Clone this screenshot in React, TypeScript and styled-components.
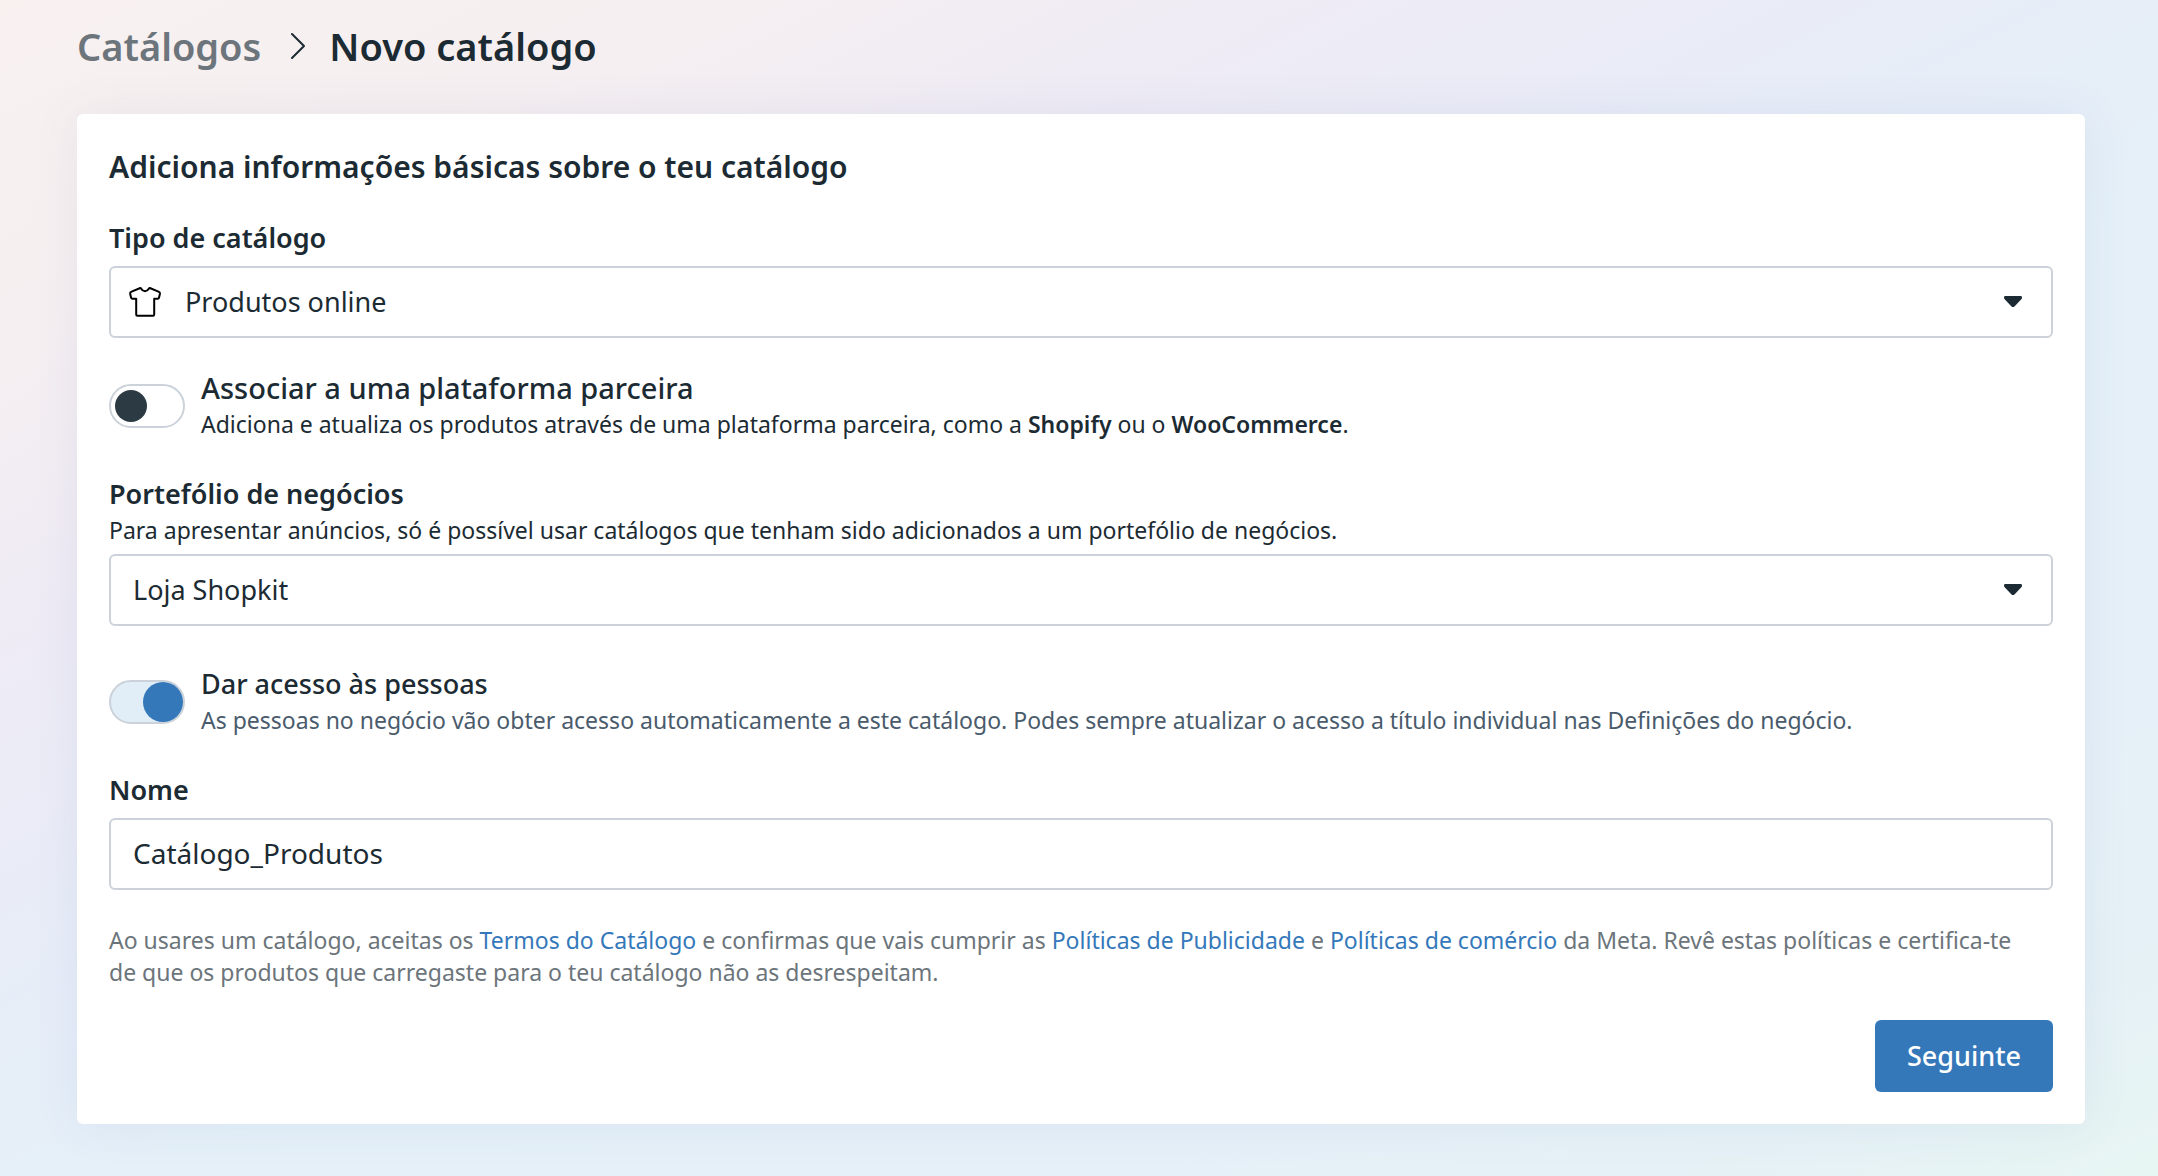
import React, { useId, useState } from "react";
import type { ReactNode } from "react";
import styled, { createGlobalStyle, css } from "styled-components";

const color = {
  text: "#1c2b33",
  muted: "#6c757b",
  slate: "#4a5b6c",
  border: "#cbd2d9",
  accent: "#3578ba",
  accentSoft: "#e1edf7",
  knob: "#2c3a43",
};

const GlobalStyle = createGlobalStyle`
  *, *::before, *::after { box-sizing: border-box; }
  html, body { margin: 0; }
  body {
    font-family: "Noto Sans", "Open Sans", sans-serif;
    color: ${color.text};
  }
`;

const Page = styled.main`
  min-height: 100vh;
  padding: 22px 73px 52px 77px;
  background: linear-gradient(
    154deg,
    #f8f1f0 0%,
    #f6eff1 15%,
    #eeebf5 29%,
    #e9ecf7 40%,
    #e6eef8 48%,
    #e5f0f8 56%,
    #e6f0f8 78%,
    #e6f1f6 90%,
    #e7f5f2 100%
  );
`;

const Breadcrumb = styled.nav`
  display: flex;
  align-items: center;
  gap: 24px;
  margin-bottom: 44px;
  font-size: 38px;
  font-weight: 600;
  line-height: 48px;
`;

const CrumbLink = styled.a`
  color: ${color.muted};
  text-decoration: none;
`;

const CrumbTitle = styled.h1`
  margin: 0;
  font: inherit;
`;

const Card = styled.form`
  display: flex;
  flex-direction: column;
  gap: 34px;
  padding: 32px;
  border-radius: 6px;
  background: #fff;
  box-shadow: 0 0 48px rgba(60, 90, 150, 0.08);
`;

const Heading = styled.h2`
  margin: 0;
  font-size: 30px;
  font-weight: 600;
  line-height: 42px;
`;

const Field = styled.div<{ $loose?: boolean }>`
  display: flex;
  flex-direction: column;
  gap: 4px;
  margin-bottom: ${(p) => (p.$loose ? 8 : 0)}px;
`;

const Label = styled.label`
  font-size: 27px;
  font-weight: 600;
  line-height: 32px;
`;

const Help = styled.p<{ $tone?: string }>`
  margin: 0;
  font-size: 23px;
  line-height: 32px;
  color: ${(p) => p.$tone ?? color.text};

  strong {
    font-weight: 600;
  }
`;

const Terms = styled(Help)`
  padding-right: 12px;
`;

const boxed = css`
  height: 72px;
  margin-top: 8px;
  border: 2px solid ${color.border};
  border-radius: 6px;
  background: #fff;
`;

const SelectBox = styled.div<{ $joined?: boolean }>`
  ${boxed}
  display: grid;
  grid-template-columns: auto 1fr auto;
  align-items: center;
  margin-top: ${(p) => (p.$joined ? 4 : 8)}px;
  padding-right: 29px;

  > svg:first-child {
    margin: 0 2px 0 18px;
  }
  > svg:last-child {
    grid-area: 1 / 3;
    pointer-events: none;
  }
`;

const Select = styled.select`
  grid-area: 1 / 2 / 2 / 4;
  width: 100%;
  height: 68px;
  padding: 0 40px 2px 22px;
  border: 0;
  outline: 0;
  appearance: none;
  background: transparent;
  color: inherit;
  font: inherit;
  font-size: 27px;
`;

const TextInput = styled.input`
  ${boxed}
  width: 100%;
  padding: 0 22px 2px;
  outline: 0;
  color: inherit;
  font: inherit;
  font-size: 28px;
`;

const SwitchRow = styled.div`
  display: flex;
  align-items: flex-start;
  gap: 16px;
  padding-bottom: 4px;
`;

const SwitchText = styled.div`
  display: flex;
  flex-direction: column;
  gap: 4px;
`;

const SwitchLabel = styled.label<{ $large?: boolean }>`
  font-size: ${(p) => (p.$large ? 29 : 27)}px;
  font-weight: 500;
  line-height: 32px;
`;

const Switch = styled.input`
  appearance: none;
  flex: none;
  display: flex;
  align-items: center;
  width: 76px;
  height: 44px;
  margin: 12px 0 0;
  padding: 0 4px;
  border: 2px solid ${color.border};
  border-radius: 22px;
  background: #fff;

  &::before {
    content: "";
    width: 32px;
    height: 32px;
    border-radius: 50%;
    background: ${color.knob};
  }

  &:checked {
    justify-content: flex-end;
    padding: 0;
    background: ${color.accentSoft};
  }
  &:checked::before {
    width: 40px;
    height: 40px;
    background: ${color.accent};
  }
`;

const Footer = styled.footer`
  display: flex;
  flex-direction: column;
  gap: 32px;
`;

const TextLink = styled.a`
  color: ${color.accent};
  text-decoration: none;
`;

const SubmitButton = styled.button`
  align-self: flex-end;
  height: 72px;
  padding: 0 32px 2px;
  border: 0;
  border-radius: 6px;
  background: ${color.accent};
  color: #fff;
  font: inherit;
  font-size: 27px;
  font-weight: 500;
`;

const Chevron = () => (
  <svg width="20" height="28" viewBox="0 0 20 28" fill="none" stroke={color.text} strokeWidth="2" strokeLinecap="round" strokeLinejoin="round" aria-hidden="true">
    <path d="M7 2 19 14 7 26" />
  </svg>
);

const Shirt = () => (
  <svg width="32" height="32" viewBox="0 0 32 32" fill="none" stroke="#000" strokeWidth="2" strokeLinejoin="round" aria-hidden="true">
    <path d="M11.3 2 2.6 5.6c-1 .4-1.6 1.3-1.4 2.3l1 4c.2.5.6.8 1.1.8H7.2V28.6c0 .7.5 1.2 1.2 1.2H24c.7 0 1.2-.5 1.2-1.2V12.7h3.6c.6 0 1-.3 1.1-.8l1-4c.2-1-.4-1.9-1.4-2.3L20.8 2c-.4 0-.7.3-1 .7C18.5 4.9 17.2 5.2 16 5.2s-2.5-.3-3.8-2.5c-.2-.4-.5-.7-.9-.7Z" />
  </svg>
);

const Caret = () => (
  <svg width="18" height="12" viewBox="0 0 18 12" fill={color.text} aria-hidden="true">
    <path d="M1.5 0h15C17.6 0 18 .7 18 1.5c0 .9-.3 1.500-.9 2.1L10.5 10.4c-1 .9-2 .9-3 0L.9 3.6C.3 3 0 2.4 0 1.5 0 .7.4 0 1.5 0Z" />
  </svg>
);

interface SwitchFieldProps {
  title: string;
  large?: boolean;
  tone?: string;
  initial: boolean;
  children: ReactNode;
}

function SwitchField({ title, large, tone, initial, children }: SwitchFieldProps) {
  const id = useId();
  const [on, setOn] = useState(initial);
  return (
    <SwitchRow>
      <Switch id={id} type="checkbox" role="switch" checked={on} onChange={(e) => setOn(e.target.checked)} />
      <SwitchText>
        <SwitchLabel htmlFor={id} $large={large}>
          {title}
        </SwitchLabel>
        <Help $tone={tone}>{children}</Help>
      </SwitchText>
    </SwitchRow>
  );
}

export default function App() {
  return (
    <>
      <GlobalStyle />
      <Page>
        <Breadcrumb>
          <CrumbLink href="#catalogos">Catálogos</CrumbLink>
          <Chevron />
          <CrumbTitle>Novo catálogo</CrumbTitle>
        </Breadcrumb>

        <Card onSubmit={(e) => e.preventDefault()}>
          <Heading>Adiciona informações básicas sobre o teu catálogo</Heading>

          <Field>
            <Label htmlFor="tipo">Tipo de catálogo</Label>
            <SelectBox>
              <Shirt />
              <Select id="tipo">
                <option>Produtos online</option>
              </Select>
              <Caret />
            </SelectBox>
          </Field>

          <SwitchField title="Associar a uma plataforma parceira" large initial={false}>
            Adiciona e atualiza os produtos através de uma plataforma parceira, como a <strong>Shopify</strong> ou o{" "}
            <strong>WooCommerce</strong>.
          </SwitchField>

          <Field $loose>
            <Label htmlFor="portefolio">Portefólio de negócios</Label>
            <Help>
              Para apresentar anúncios, só é possível usar catálogos que tenham sido adicionados a um portefólio de
              negócios.
            </Help>
            <SelectBox $joined>
              <Select id="portefolio">
                <option>Loja Shopkit</option>
              </Select>
              <Caret />
            </SelectBox>
          </Field>

          <SwitchField title="Dar acesso às pessoas" tone={color.slate} initial>
            As pessoas no negócio vão obter acesso automaticamente a este catálogo. Podes sempre atualizar o acesso a
            título individual nas Definições do negócio.
          </SwitchField>

          <Field>
            <Label htmlFor="nome">Nome</Label>
            <TextInput id="nome" type="text" defaultValue="Catálogo_Produtos" />
          </Field>

          <Footer>
            <Terms $tone={color.muted}>
              Ao usares um catálogo, aceitas os <TextLink href="#termos">Termos do Catálogo</TextLink> e confirmas que
              vais cumprir as <TextLink href="#publicidade">Políticas de Publicidade</TextLink> e{" "}
              <TextLink href="#comercio">Políticas de comércio</TextLink> da Meta. Revê estas políticas e certifica-te
              de que os produtos que carregaste para o teu catálogo não as desrespeitam.
            </Terms>
            <SubmitButton type="submit">Seguinte</SubmitButton>
          </Footer>
        </Card>
      </Page>
    </>
  );
}
